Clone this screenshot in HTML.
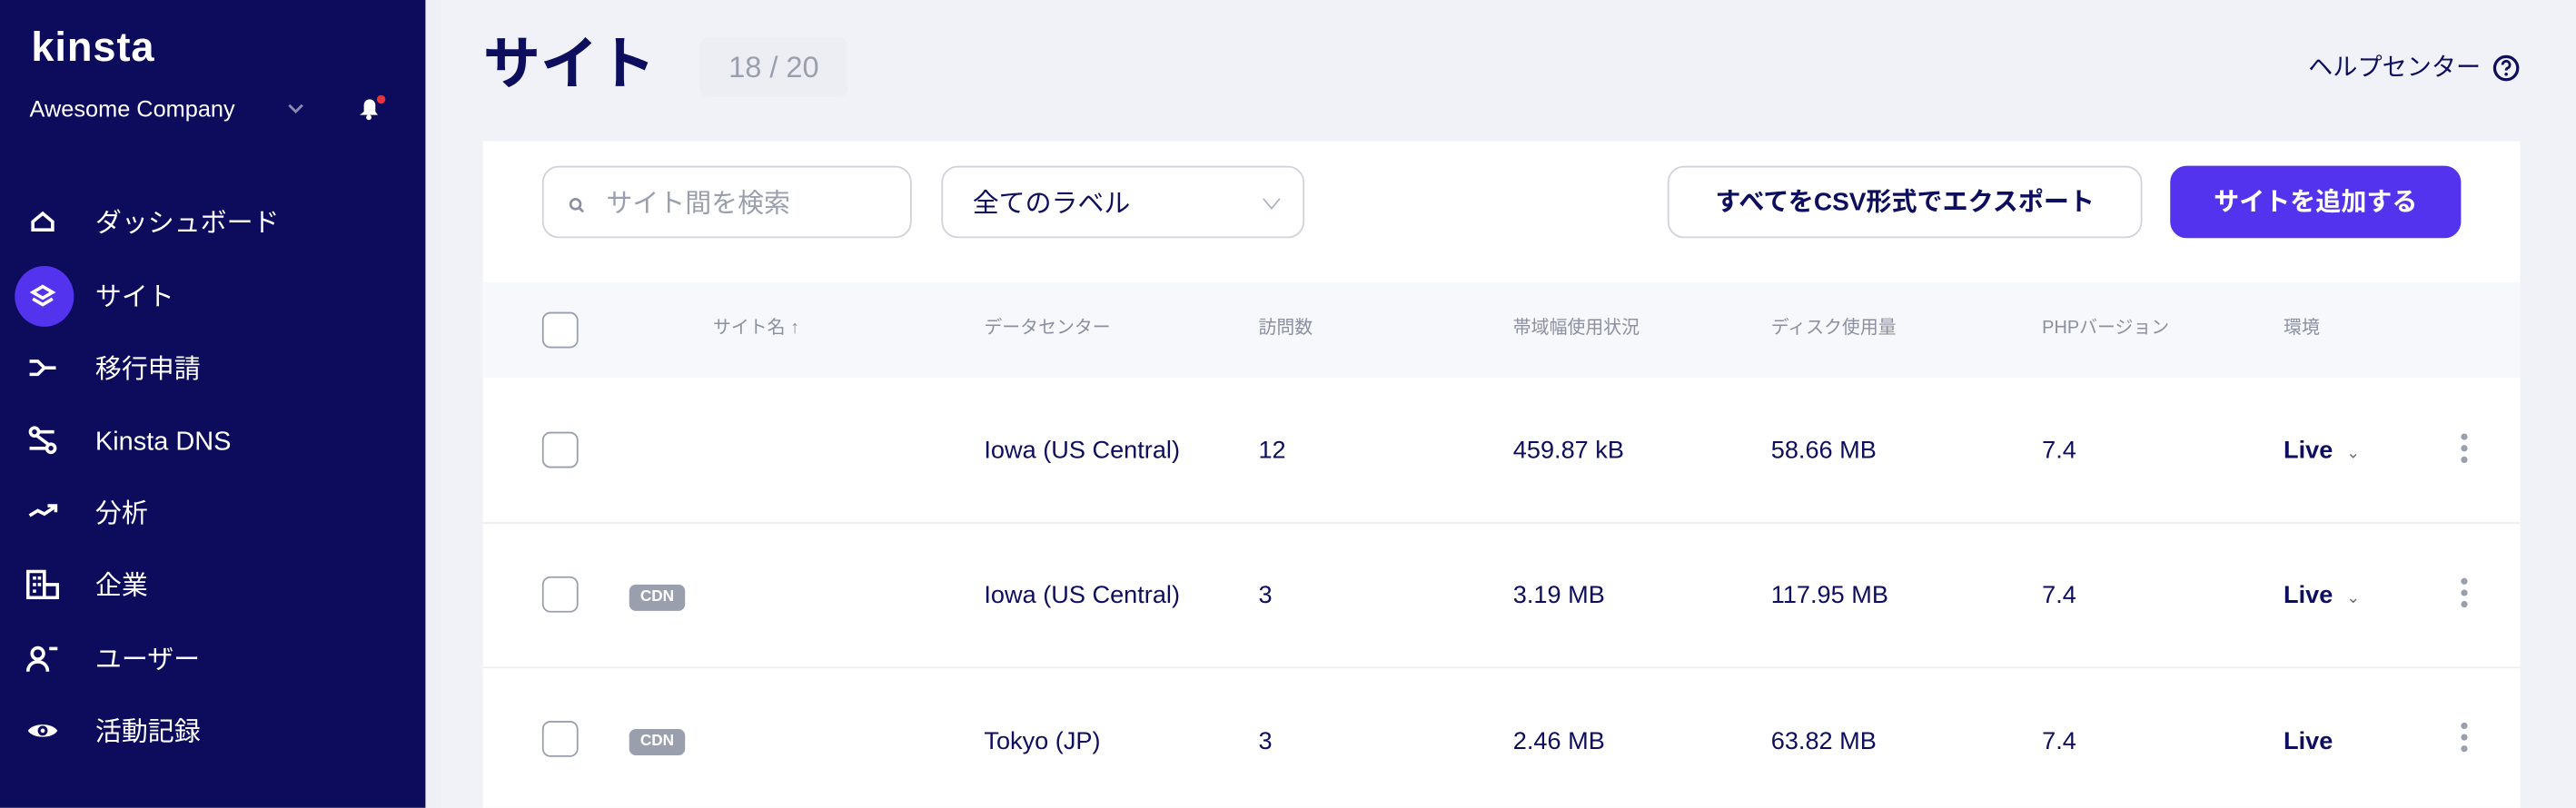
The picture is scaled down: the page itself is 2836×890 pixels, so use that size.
<!DOCTYPE html>
<html><head><meta charset="utf-8"><style>
*{margin:0;padding:0;box-sizing:border-box}
html,body{width:2836px;height:890px;overflow:hidden;background:#f1f2f7}
#s{position:absolute;left:0;top:0;width:1568px;height:492px;overflow:hidden;transform:scale(1.80867);transform-origin:0 0;font-family:"Liberation Sans","Noto Sans CJK JP",sans-serif;color:#0e0e5e}
.a{position:absolute;white-space:nowrap}
#side{position:absolute;left:0;top:0;width:259px;height:492px;background:#0c0b5c;color:#fff}
.nav{position:absolute;left:58px;font-size:16px;line-height:20px;color:#fff}
.ic{position:absolute;left:17px;width:18px;height:18px}
#card{position:absolute;left:294px;top:86px;width:1240px;height:406px;background:#fff}
.inp{position:absolute;top:15px;height:44px;border:1px solid #d0d3da;border-radius:10px;background:#fff}
.hd{position:absolute;left:0;top:86px;width:1240px;height:58px;background:#f7f8fb}
.ht{position:absolute;top:107px;font-size:11px;color:#8b90a0;line-height:14px}
.cb{position:absolute;left:36px;width:22px;height:22px;border:1.5px solid #9a9fae;border-radius:5px;background:#fff}
.rt{position:absolute;font-size:15px;line-height:18px;color:#0e0e5e}
.ln{position:absolute;left:0;width:1240px;height:1px;background:#eceef3}
.cdn{position:absolute;left:89px;width:34px;height:16px;border-radius:4px;background:#9a9fae;color:#fff;font-size:9.5px;font-weight:bold;text-align:center;line-height:16px}
.keb{position:absolute;left:1204px;width:4px}
.keb i{display:block;width:4px;height:4px;border-radius:2px;background:#9a9fae;margin-bottom:3px}
</style></head><body><div id="s">
<div id="side">
 <div class="a" style="left:19px;top:15px;font-size:25px;font-weight:bold;letter-spacing:0.5px;line-height:28px">kinsta</div>
 <div class="a" style="left:18px;top:58px;font-size:14px;line-height:17px">Awesome Company</div>
 <svg class="a" style="left:175px;top:62px" width="10" height="8" viewBox="0 0 10 8"><path d="M1 2l4 4 4-4" stroke="#8a8ab0" stroke-width="1.6" fill="none"/></svg>
 <svg class="a" style="left:217px;top:57px" width="18" height="18" viewBox="0 0 18 18"><path d="M2 13h11l-1.5-2V7a3.5 3.5 0 0 0-7 0v4z" fill="#fff"/><circle cx="7.5" cy="14.5" r="1.6" fill="#fff"/><circle cx="15" cy="3.5" r="2.6" fill="#e5343a"/></svg>
 <svg class="ic" style="top:126px" viewBox="0 0 18 18"><path d="M3 14V9l6-5 6 5v5z" fill="none" stroke="#fff" stroke-width="2"/></svg>
 <div class="nav" style="top:127px">ダッシュボード</div>
 <div class="a" style="left:9px;top:162px;width:36px;height:37px;border-radius:50%;background:#5333ed"></div>
 <svg class="ic" style="top:171px" viewBox="0 0 18 18"><path d="M3 7l6-3.5 6 3.5-6 3.5z" fill="none" stroke="#fff" stroke-width="2"/><path d="M3 11l6 3.5 6-3.5" fill="none" stroke="#fff" stroke-width="2"/></svg>
 <div class="nav" style="top:172px">サイト</div>
 <svg class="ic" style="top:215px" viewBox="0 0 18 18"><path d="M1 5h5l4 4-4 4H1M10 9h7" fill="none" stroke="#fff" stroke-width="2"/></svg>
 <div class="nav" style="top:216px">移行申請</div>
 <svg class="ic" style="top:259px" viewBox="0 0 18 18"><circle cx="4" cy="4" r="2.5" fill="none" stroke="#fff" stroke-width="2"/><circle cx="14" cy="14" r="2.5" fill="none" stroke="#fff" stroke-width="2"/><path d="M6.5 4H16M1 14h10.5M5 6l8 6" stroke="#fff" stroke-width="2"/></svg>
 <div class="nav" style="top:260px">Kinsta DNS</div>
 <svg class="ic" style="top:303px" viewBox="0 0 18 18"><path d="M1 11l5-3 4 2 6-4M12 5h5v4" fill="none" stroke="#fff" stroke-width="2"/></svg>
 <div class="nav" style="top:304px">分析</div>
 <svg class="ic" style="left:16px;top:347px;width:20px" viewBox="0 0 20 18"><path d="M1 1h10v16H1zM11 9h8v8h-8" fill="none" stroke="#fff" stroke-width="2"/><path d="M4 5h2M7 5h2M4 9h2M7 9h2M4 13h2" stroke="#fff" stroke-width="2"/></svg>
 <div class="nav" style="top:348px">企業</div>
 <svg class="ic" style="left:16px;top:392px;width:20px" viewBox="0 0 20 18"><circle cx="7" cy="6" r="3.5" fill="none" stroke="#fff" stroke-width="2"/><path d="M1 17c0-4 3-6 6-6s6 2 6 6M14 3h5" fill="none" stroke="#fff" stroke-width="2"/></svg>
 <div class="nav" style="top:393px">ユーザー</div>
 <svg class="ic" style="left:16px;top:436px;width:20px" viewBox="0 0 20 18"><path d="M1 9c3-5 15-5 18 0-3 5-15 5-18 0z" fill="#fff"/><circle cx="10" cy="9" r="3" fill="#0c0b5c"/><circle cx="10" cy="9" r="1.3" fill="#fff"/></svg>
 <div class="nav" style="top:437px">活動記録</div>
</div>
<div class="a" style="left:259px;top:0;width:10px;height:492px;background:#eef0f5"></div>
<div class="a" style="left:294px;top:18px;font-size:35px;font-weight:bold;line-height:44px;color:#0e0e5e">サイト</div>
<div class="a" style="left:426px;top:23px;width:90px;height:36px;border-radius:5px;background:#eceef4;color:#9a9fae;font-size:18px;line-height:36px;text-align:center">18 / 20</div>
<div class="a" style="left:1405px;top:33px;font-size:15px;line-height:18px;color:#0e0e5e">ヘルプセンター</div>
<svg class="a" style="left:1517px;top:33px" width="17" height="17" viewBox="0 0 17 17"><circle cx="8.5" cy="8.5" r="7" fill="none" stroke="#0e0e5e" stroke-width="1.8"/><path d="M6.3 6.5a2.2 2.2 0 1 1 3 2c-.6.3-.8.7-.8 1.4" fill="none" stroke="#0e0e5e" stroke-width="1.6"/><circle cx="8.5" cy="12.2" r="1" fill="#0e0e5e"/></svg>
<div id="card">
 <div class="inp" style="left:36px;width:225px"><svg class="a" style="left:15px;top:18px" width="10" height="10" viewBox="0 0 10 10"><circle cx="4.3" cy="4.3" r="3" fill="none" stroke="#8b90a0" stroke-width="1.5"/><path d="M6.5 6.5l2.5 2.5" stroke="#8b90a0" stroke-width="1.5"/></svg><div class="a" style="left:38px;top:13px;font-size:16px;color:#9a9fae;line-height:20px">サイト間を検索</div></div>
 <div class="inp" style="left:279px;width:221px"><div class="a" style="left:18px;top:13px;font-size:16px;line-height:20px;color:#0e0e5e">全てのラベル</div><svg class="a" style="left:194px;top:18px" width="12" height="9" viewBox="0 0 12 9"><path d="M1 1l5 6 5-6" fill="none" stroke="#b0b4c0" stroke-width="1"/></svg></div>
 <div class="inp" style="left:721px;width:289px;text-align:center;font-size:15.5px;font-weight:bold;line-height:44px;color:#0e0e5e">すべてをCSV形式でエクスポート</div>
 <div class="inp" style="left:1027px;width:177px;background:#5333ed;border-color:#5333ed;color:#fff;text-align:center;font-size:15.5px;font-weight:bold;line-height:44px">サイトを追加する</div>
 <div class="hd"></div>
 <div class="cb" style="top:104px"></div>
 <div class="ht" style="left:140px">サイト名 ↑</div>
 <div class="ht" style="left:305px">データセンター</div>
 <div class="ht" style="left:472px">訪問数</div>
 <div class="ht" style="left:627px">帯域幅使用状況</div>
 <div class="ht" style="left:784px">ディスク使用量</div>
 <div class="ht" style="left:949px">PHPバージョン</div>
 <div class="ht" style="left:1096px">環境</div>
 <div class="cb" style="top:177px"></div>
 <div class="rt" style="left:305px;top:180px">Iowa (US Central)</div>
 <div class="rt" style="left:472px;top:180px">12</div>
 <div class="rt" style="left:627px;top:180px">459.87 kB</div>
 <div class="rt" style="left:784px;top:180px">58.66 MB</div>
 <div class="rt" style="left:949px;top:180px">7.4</div>
 <div class="rt" style="left:1096px;top:180px;font-weight:bold">Live <span style="font-size:10px;color:#6b7080;font-weight:normal;margin-left:4px">⌄</span></div>
 <div class="keb" style="top:178px"><i></i><i></i><i></i></div>
 <div class="ln" style="top:232px"></div>
 <div class="cb" style="top:265px"></div><div class="cdn" style="top:270px">CDN</div>
 <div class="rt" style="left:305px;top:268px">Iowa (US Central)</div>
 <div class="rt" style="left:472px;top:268px">3</div>
 <div class="rt" style="left:627px;top:268px">3.19 MB</div>
 <div class="rt" style="left:784px;top:268px">117.95 MB</div>
 <div class="rt" style="left:949px;top:268px">7.4</div>
 <div class="rt" style="left:1096px;top:268px;font-weight:bold">Live <span style="font-size:10px;color:#6b7080;font-weight:normal;margin-left:4px">⌄</span></div>
 <div class="keb" style="top:266px"><i></i><i></i><i></i></div>
 <div class="ln" style="top:320px"></div>
 <div class="cb" style="top:353px"></div><div class="cdn" style="top:358px">CDN</div>
 <div class="rt" style="left:305px;top:357px">Tokyo (JP)</div>
 <div class="rt" style="left:472px;top:357px">3</div>
 <div class="rt" style="left:627px;top:357px">2.46 MB</div>
 <div class="rt" style="left:784px;top:357px">63.82 MB</div>
 <div class="rt" style="left:949px;top:357px">7.4</div>
 <div class="rt" style="left:1096px;top:357px;font-weight:bold">Live</div>
 <div class="keb" style="top:354px"><i></i><i></i><i></i></div>
</div>
</div></body></html>
